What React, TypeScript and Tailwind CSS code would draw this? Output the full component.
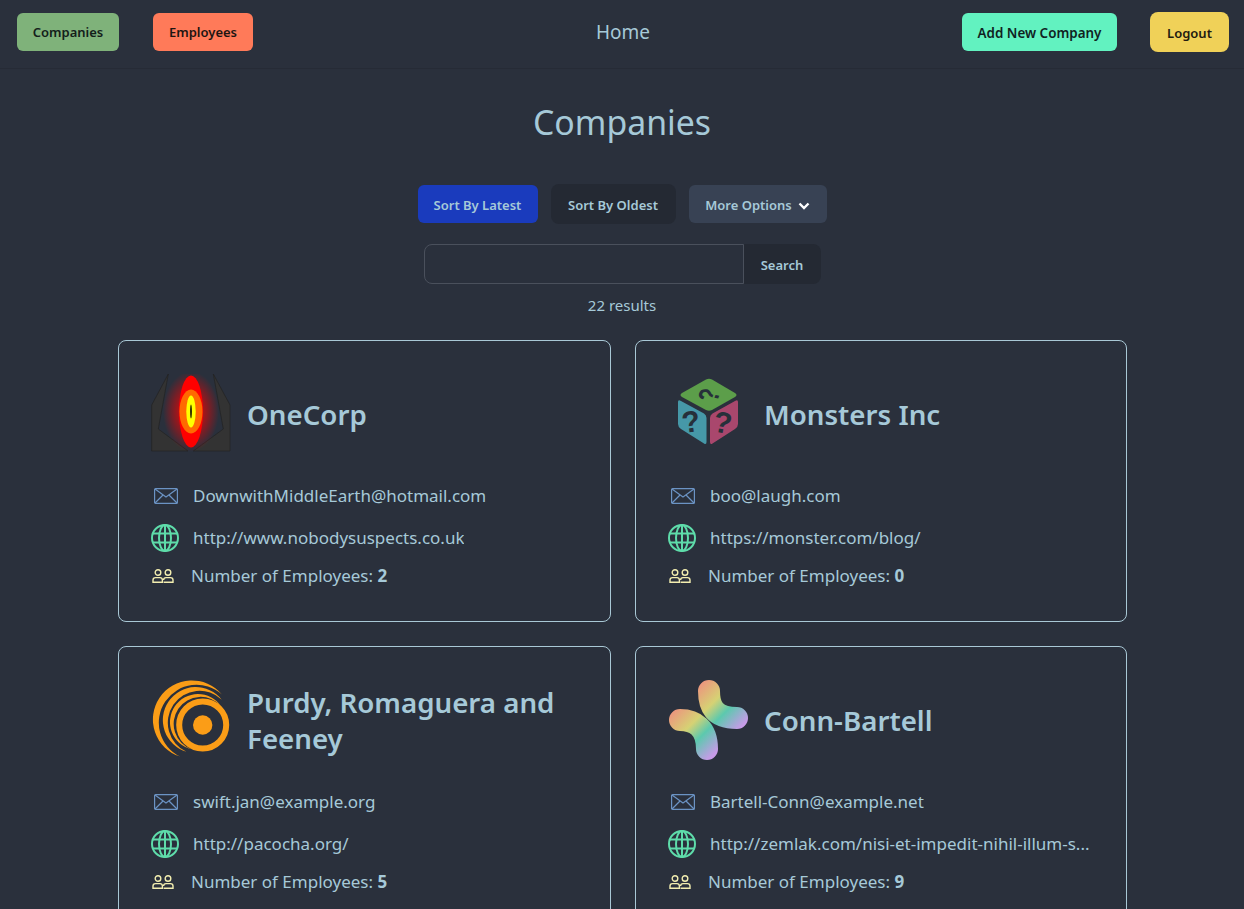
import { ReactNode } from 'react';

// --- Logos ---
const EyeLogo = () => (
  <svg width="80" height="80" viewBox="0 0 80 80">
    <defs>
      <radialGradient id="glow" cx="50%" cy="50%" r="50%">
        <stop offset="35%" stopColor="#ff0000" stopOpacity="0.7" />
        <stop offset="100%" stopColor="#ff0000" stopOpacity="0" />
      </radialGradient>
    </defs>
    <path d="M17.3 0 L0.7 31 L0.7 77 L37 77 L7.3 55 Z" fill="#333333" stroke="#222222" strokeWidth="0.7" />
    <path d="M62.3 0 L79 31 L79 77 L42.3 77 L72.3 55 Z" fill="#333333" stroke="#222222" strokeWidth="0.7" />
    <ellipse cx="40" cy="37.5" rx="28" ry="40" fill="url(#glow)" />
    <ellipse cx="40" cy="37.5" rx="12" ry="36" fill="#ff0000" />
    <ellipse cx="40" cy="37.5" rx="11.5" ry="22" fill="#ff6a00" />
    <ellipse cx="40" cy="37.5" rx="4.7" ry="16" fill="#ffff00" />
    <ellipse cx="40" cy="37.5" rx="1" ry="7" fill="#333300" />
  </svg>
);

const CubeLogo = () => (
  <svg width="80" height="80" viewBox="0 0 80 80">
    <path d="M38 5.5 Q41 4 44 5.5 L67 19 Q70 21 67 23 L44 36 Q41 37.5 38 36 L14 23 Q11 21 14 19 Z" fill="#5c9e4a" />
    <path d="M10 28 Q10 25 13 27 L36 39.5 Q38.5 41 38.5 44 L38.5 68 Q38.5 71 36 69.5 L13 55 Q10 53 10 50 Z" fill="#4698a8" />
    <path d="M70 28 Q70 25 67 27 L44.5 39.5 Q42 41 42 44 L42 68 Q42 71 44.5 69.5 L67 55 Q70 53 70 50 Z" fill="#a9476d" />
    <text x="0" y="10" textAnchor="middle" fontFamily="Liberation Sans, sans-serif" fontWeight="700" fontSize="29" fill="#26303a" transform="translate(41 21) scale(1 0.7) rotate(-75)">?</text>
    <text x="23" y="58" textAnchor="middle" fontFamily="Liberation Sans, sans-serif" fontWeight="700" fontSize="30" fill="#26303a" transform="rotate(-8 23 48)">?</text>
    <text x="55" y="59" textAnchor="middle" fontFamily="Liberation Sans, sans-serif" fontWeight="700" fontSize="30" fill="#26303a" transform="rotate(10 55 48)">?</text>
  </svg>
);

const RingsLogo = () => (
  <svg width="80" height="80" viewBox="0 0 80 80" fill="#fb9d17">
    <circle cx="51.7" cy="45" r="23.5" fill="none" stroke="#fb9d17" strokeWidth="6" />
    <circle cx="51.7" cy="45" r="9.7" />
    <path d="M70.9 14.5 A 39 39 0 1 0 29.1 76.6 A 37.8 37.8 0 1 1 70.9 14.5 Z" />
    <path d="M70.8 19.7 A 33 33 0 1 0 35.4 71.7 A 31.9 31.9 0 1 1 70.8 19.7 Z" />
    <path d="M70 26.1 A 28 28 0 1 0 40.6 69.3 A 27 27 0 1 1 70 26.1 Z" />
  </svg>
);

const PetalLogo = () => (
  <svg width="80" height="80" viewBox="0 0 80 80">
    <defs>
      <linearGradient id="petal" gradientUnits="userSpaceOnUse" x1="15" y1="15" x2="60" y2="60">
        <stop offset="0%" stopColor="#f08a80" />
        <stop offset="42%" stopColor="#d6d274" />
        <stop offset="66%" stopColor="#5cc9ae" />
        <stop offset="100%" stopColor="#c79be8" />
      </linearGradient>
    </defs>
    <path d="M12 40 C 27 40 39 48 39 69" fill="none" stroke="url(#petal)" strokeWidth="22" strokeLinecap="round" />
    <path d="M41 11 C 41 26 46 38 69 38" fill="none" stroke="url(#petal)" strokeWidth="22" strokeLinecap="round" />
  </svg>
);

// --- Small icons ---
const MailIcon = () => (
  <svg width="24" height="16" viewBox="0 0 24 16" fill="none" stroke="#6b93c4" strokeWidth="1.2">
    <rect x="0.6" y="0.6" width="22.8" height="14.8" rx="1" />
    <path d="M1 1 L12 9 L23 1 M1 15 L9 7 M23 15 L15 7" />
  </svg>
);

const GlobeIcon = () => (
  <svg width="28" height="28" viewBox="0 0 28 28" fill="none" stroke="#5edcaa" strokeWidth="2">
    <circle cx="14" cy="14" r="13" />
    <ellipse cx="14" cy="14" rx="6" ry="13" />
    <path d="M14 1 V27 M2 9.5 H26 M2 18.5 H26" />
  </svg>
);

const PeopleIcon = () => (
  <svg width="22" height="14" viewBox="0 0 22 14" fill="none" stroke="#f3eeb0" strokeWidth="1.4">
    <circle cx="6" cy="3.5" r="2.8" />
    <circle cx="16" cy="3.5" r="2.8" />
    <path d="M1 13.2 V11 Q1 8.6 3.5 8.6 H8 Q10.4 8.6 10.4 11 V13.2 Z" />
    <path d="M11.6 11 Q11.6 8.6 14 8.6 H18.5 Q21 8.6 21 11 V13.2 H11.6" />
  </svg>
);

function Card({ logo, name, email, url, count }: { logo: ReactNode; name: string; email: string; url: string; count: number }) {
  return (
    <div className="h-[282px] min-w-0 rounded-lg border border-[#a9c8d6] px-8 pt-[33px]">
      <div className="flex h-20 items-center gap-[16px]">
        <div className="w-20 shrink-0">{logo}</div>
        <h2 className="text-[27.7px] leading-9 font-semibold text-[#a6c9d8]">{name}</h2>
      </div>
      <div className="mt-[27px] flex h-[30px] items-center pl-[3px]">
        <div className="w-[39px] shrink-0"><MailIcon /></div>
        <span className="truncate text-[17px] text-[#a6c9d8]">{email}</span>
      </div>
      <div className="mt-3 flex h-[30px] items-center">
        <div className="w-[42px] shrink-0"><GlobeIcon /></div>
        <span className="truncate text-[17px] text-[#a6c9d8]">{url}</span>
      </div>
      <div className="mt-2 flex h-[30px] items-center pl-[1px]">
        <div className="w-[39px] shrink-0"><PeopleIcon /></div>
        <span className="text-[17px] text-[#a6c9d8]">Number of Employees: <b className="font-bold">{count}</b></span>
      </div>
    </div>
  );
}

export default function App() {
  return (
    <div className="h-screen overflow-hidden bg-[#2a303c] font-['Noto_Sans',sans-serif] text-[#a6c9d8]">
      {/* Top nav */}
      <nav className="flex h-[69px] items-center justify-between border-b border-[#262b36] pr-[15px] pb-1 pl-[17px]">
        <div className="flex w-[400px] items-center gap-[34px]">
          <button className="h-[38px] w-[102px] rounded-md bg-[#7fb27a] pt-0.5 text-[13px] font-semibold text-[#14201a]">Companies</button>
          <button className="h-[38px] w-[100px] rounded-md bg-[#ff7a59] pt-0.5 text-[13px] font-semibold text-[#1d1512]">Employees</button>
        </div>
        <span className="text-[19px] text-[#a6c9d8]">Home</span>
        <div className="flex w-[400px] items-center justify-end gap-[33px]">
          <button className="h-[38px] w-[155px] rounded-md bg-[#62f2c0] pt-0.5 text-[13.4px] font-semibold text-[#10231f]">Add New Company</button>
          <button className="h-10 w-[79px] rounded-lg bg-[#f0d158] pt-[3px] text-[13px] font-semibold text-[#221a10]">Logout</button>
        </div>
      </nav>

      <main>
        <h1 className="mt-[29px] text-center text-[33.8px] leading-[48px] text-[#a6c9d8]">Companies</h1>

        <div className="mt-[39px] flex justify-center gap-[13px]">
          <button className="h-[38px] w-[120px] rounded-md bg-[#1a3bbd] pt-[3px] text-[13px] font-semibold">Sort By Latest</button>
          <button className="h-10 w-[125px] -translate-y-px rounded-lg bg-[#242933] pt-[3px] text-[13px] font-semibold">Sort By Oldest</button>
          <button className="flex h-[38px] w-[138px] items-center justify-center gap-1.5 rounded-md bg-[#384254] pt-[3px] text-[13px] font-semibold">
            More Options
            <svg width="12" height="8" viewBox="0 0 12 8" fill="none" stroke="#ffffff" strokeWidth="2.4"><path d="M1.5 1.5 L6 6 L10.5 1.5" /></svg>
          </button>
        </div>

        <div className="mt-[19px] flex justify-center">
          <input className="h-10 w-[320px] rounded-l-lg border border-[#4a505c] bg-transparent" />
          <button className="h-10 w-[77px] rounded-r-lg bg-[#242933] pt-1 text-[13px] font-semibold">Search</button>
        </div>

        <p className="mt-[11px] text-center text-[15px] leading-5">22 results</p>

        <div className="mt-[25px] ml-[118px] grid w-[1009px] grid-cols-[493px_492px] gap-6">
          <Card logo={<EyeLogo />} name="OneCorp" email="DownwithMiddleEarth@hotmail.com" url="http://www.nobodysuspects.co.uk" count={2} />
          <Card logo={<CubeLogo />} name="Monsters Inc" email="boo@laugh.com" url="https://monster.com/blog/" count={0} />
          <Card logo={<RingsLogo />} name="Purdy, Romaguera and Feeney" email="swift.jan@example.org" url="http://pacocha.org/" count={5} />
          <Card logo={<PetalLogo />} name="Conn-Bartell" email="Bartell-Conn@example.net" url="http://zemlak.com/nisi-et-impedit-nihil-illum-s..." count={9} />
        </div>
      </main>
    </div>
  );
}
